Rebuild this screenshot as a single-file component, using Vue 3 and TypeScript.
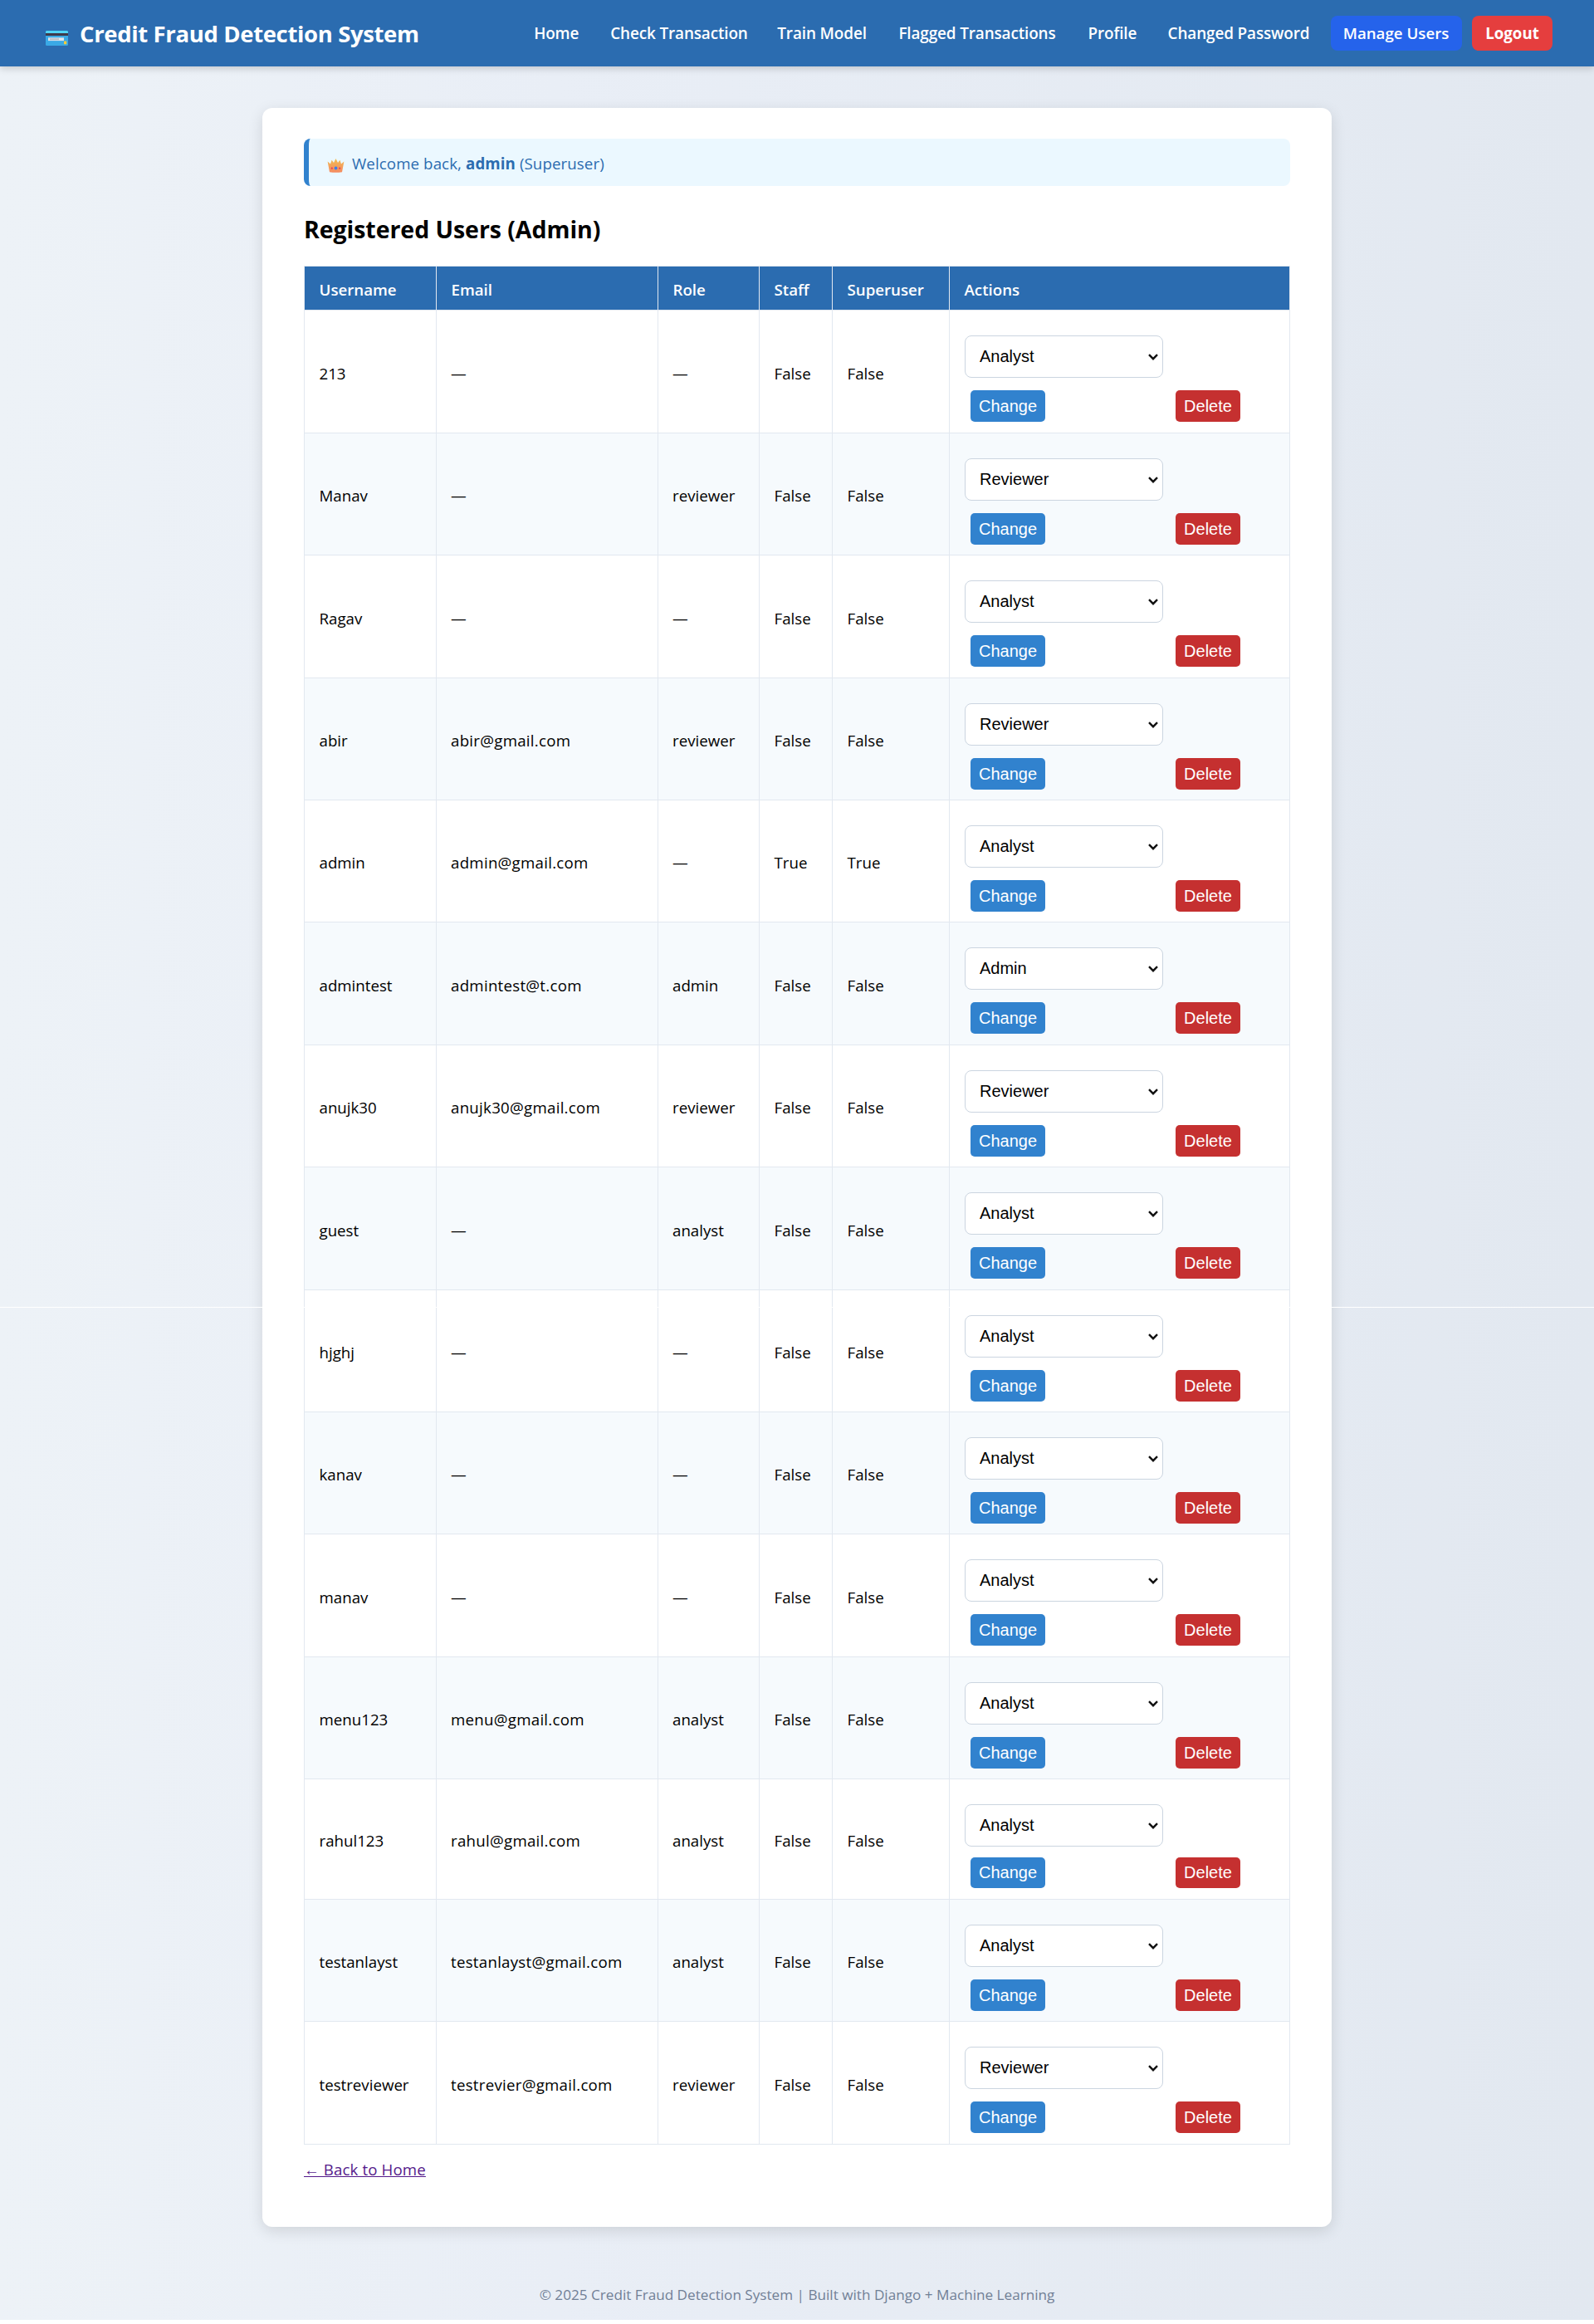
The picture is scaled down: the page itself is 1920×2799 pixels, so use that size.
<script setup lang="ts">
interface User { name: string; email: string; role: string; admin?: boolean; pick: string; h: number }
const nav = [
  { label: 'Home', w: 54 }, { label: 'Check Transaction', w: 163 }, { label: 'Train Model', w: 108 },
  { label: 'Flagged Transactions', w: 190 }, { label: 'Profile', w: 58 }, { label: 'Changed Password', w: 172 },
]
const u = (name: string, email: string, role: string, pick = 'Analyst', h = 147, admin = false): User =>
  ({ name, email: email || '—', role: role || '—', pick, h, admin })
const users: User[] = [
  u('213', '', '', 'Analyst', 148),
  u('Manav', '', 'reviewer', 'Reviewer'),
  u('Ragav', '', '', 'Analyst', 148),
  u('abir', 'abir@gmail.com', 'reviewer', 'Reviewer'),
  u('admin', 'admin@gmail.com', '', 'Analyst', 147, true),
  u('admintest', 'admintest@t.com', 'admin', 'Admin', 148),
  u('anujk30', 'anujk30@gmail.com', 'reviewer', 'Reviewer'),
  u('guest', '', 'analyst', 'Analyst', 148),
  u('hjghj', '', ''),
  u('kanav', '', ''),
  u('manav', '', '', 'Analyst', 148),
  u('menu123', 'menu@gmail.com', 'analyst'),
  u('rahul123', 'rahul@gmail.com', 'analyst', 'Analyst', 145),
  u('testanlayst', 'testanlayst@gmail.com', 'analyst'),
  u('testreviewer', 'testrevier@gmail.com', 'reviewer', 'Reviewer', 148),
]
</script>

<template>
  <div class="page">
    <header>
      <div class="brand">
        <svg class="card-icon" viewBox="0 0 27 18">
          <rect width="27" height="18" rx="1.5" fill="#3aa9e6" />
          <path d="M0 4V1.5Q0 0 1.5 0h24Q27 0 27 1.5V4z" fill="#50d4f5" />
          <rect y="3" width="27" height="3" fill="#40394a" />
          <rect x="3" y="8.3" width="19" height="3.8" fill="#dfe3ea" />
          <rect x="5" y="9.3" width="11" height="1.8" fill="#b9bcc4" />
          <rect x="22" y="12.5" width="3.2" height="3.8" rx=".6" fill="#f3c93c" />
        </svg>
        <span class="brand-text">Credit Fraud Detection System</span>
      </div>
      <nav>
        <a v-for="n in nav" :key="n.label" class="link" :style="{ width: n.w + 'px' }">{{ n.label }}</a>
        <a class="btn manage">Manage Users</a>
        <a class="btn logout">Logout</a>
      </nav>
    </header>
    <main>
      <div class="welcome">
        <svg class="crown" viewBox="0 0 21 18">
          <defs><linearGradient id="gold" x1="0" y1="0" x2="0" y2="1"><stop offset="0" stop-color="#f2bd52" /><stop offset="1" stop-color="#f58a60" /></linearGradient></defs>
          <path d="M.6 4.5 4 7.5 5.6 2.8 8 6 10.5 1 13 6l2.4-3.2L17 7.5l3.4-3L18 17.2Q10.5 18.2 3 17.2z" fill="url(#gold)" />
          <circle cx="10.5" cy="12.5" r="1.9" fill="#3f7ee8" /><circle cx="5.8" cy="12.7" r="1.1" fill="#e8375b" /><circle cx="15.2" cy="12.7" r="1.1" fill="#e8375b" />
        </svg>
        <span>Welcome back, <strong>admin</strong> (Superuser)</span>
      </div>
      <h2>Registered Users (Admin)</h2>
      <table>
        <colgroup><col style="width:159px"><col style="width:267px"><col style="width:122px"><col style="width:88px"><col style="width:141px"><col></colgroup>
        <thead>
          <tr><th>Username</th><th>Email</th><th>Role</th><th>Staff</th><th>Superuser</th><th>Actions</th></tr>
        </thead>
        <tbody>
          <tr v-for="r in users" :key="r.name" :class="{ compact: r.h === 145 }" :style="{ height: r.h + 'px' }">
            <td>{{ r.name }}</td><td class="email">{{ r.email }}</td><td class="role">{{ r.role }}</td>
            <td>{{ r.admin ? 'True' : 'False' }}</td><td>{{ r.admin ? 'True' : 'False' }}</td>
            <td class="actions">
              <div class="select">
                <span>{{ r.pick }}</span>
                <svg viewBox="0 0 12 8"><path d="M1 1.2 6 6.2 11 1.2" fill="none" stroke="#111" stroke-width="2.4" /></svg>
              </div>
              <div class="buttons"><button class="change">Change</button><button class="delete">Delete</button></div>
            </td>
          </tr>
        </tbody>
      </table>
      <a class="back">← Back to Home</a>
    </main>
    <footer>© 2025 Credit Fraud Detection System | Built with Django + Machine Learning</footer>
    <div class="seam"></div>
  </div>
</template>

<style>
body { background: #fff; }
</style>
<style scoped>
* { box-sizing: border-box; }
.page { position: relative; height: 2794px; background: linear-gradient(to right, #edf2f7, #e9eef6 35%, #e2e8f0); font: 18.7px/27px "Open Sans", "Noto Sans", sans-serif; color: #000; }
header { height: 80px; background: #2b6cb0; display: flex; justify-content: space-between; align-items: center; padding: 0 50px 0 55px; box-shadow: 0 3px 8px rgba(0, 0, 0, .16); color: #fff; }
.brand { display: flex; align-items: center; gap: 14px; font-size: 27.5px; font-weight: 700; white-space: nowrap; }
.card-icon { width: 27px; height: 18px; margin-top: 12px; }
.brand-text { letter-spacing: -.36px; }
nav { display: flex; align-items: center; font-weight: 600; white-space: nowrap; }
.link { margin-right: 38.1px; font-size: 18.9px; letter-spacing: -.12px; }
.btn { height: 42px; line-height: 42px; border-radius: 8px; text-align: center; }
.manage { width: 158px; background: #2563eb; margin-left: -14.2px; }
.logout { width: 97px; background: #e53e3e; margin-left: 12.5px; font-weight: 700; }
main { width: 1288px; height: 2552px; margin: 50px auto 0; background: #fff; border-radius: 12px; padding: 37px 50px 0; box-shadow: 0 5px 18px rgba(0, 0, 0, .12); }
.welcome { height: 57px; display: flex; align-items: center; gap: 9px; padding: 2px 0 0 22px; background: #ebf8ff; border-left: 6px solid #3182ce; border-radius: 8px; color: #2b6cb0; letter-spacing: .1px; }
.crown { width: 21px; height: 18px; margin-top: 4px; }
h2 { margin: 32px 0 0; height: 64px; font-size: 28.5px; line-height: 40px; font-weight: 700; letter-spacing: -.05px; }
table { width: 1188px; border-collapse: collapse; table-layout: fixed; }
th, td { border: 1px solid #e2e8f0; padding: 3px 17.5px 0; text-align: left; vertical-align: middle; }
thead tr { height: 53px; }
th { background: #2b6cb0; color: #fff; font-weight: 600; }
td.email { letter-spacing: .26px; padding-left: 17px; }
td.role { padding-left: 17px; }
tbody tr:nth-child(even) td { background: #f6fafd; }
.actions { vertical-align: top; padding: 30px 0 0 18px; font: 20px/23px "Liberation Sans", Arial, sans-serif; }
.select { width: 239px; height: 51px; border: 1px solid #cbd5e0; border-radius: 8px; background: #fff; display: flex; align-items: center; justify-content: space-between; padding: 0 5px 0 17px; }
.select svg { width: 12px; height: 8px; }
.buttons { display: flex; justify-content: space-between; width: 325px; margin: 15px 0 0 7px; }
.compact .buttons { margin-top: 13px; }
.compact button { height: 37px; }
button { height: 38px; border: 0; border-radius: 5px; color: #fff; font: inherit; padding: 0; }
.change { width: 90px; background: #3182ce; }
.delete { width: 78px; background: #c53030; }
.back { display: inline-block; margin-top: 16px; color: #551a8b; text-decoration: underline; letter-spacing: .12px; }
footer { margin-top: 68px; text-align: center; color: #718096; font-size: 17.15px; }
.seam { position: absolute; left: 0; right: 0; top: 1574px; height: 1px; background: #fff; }
</style>
